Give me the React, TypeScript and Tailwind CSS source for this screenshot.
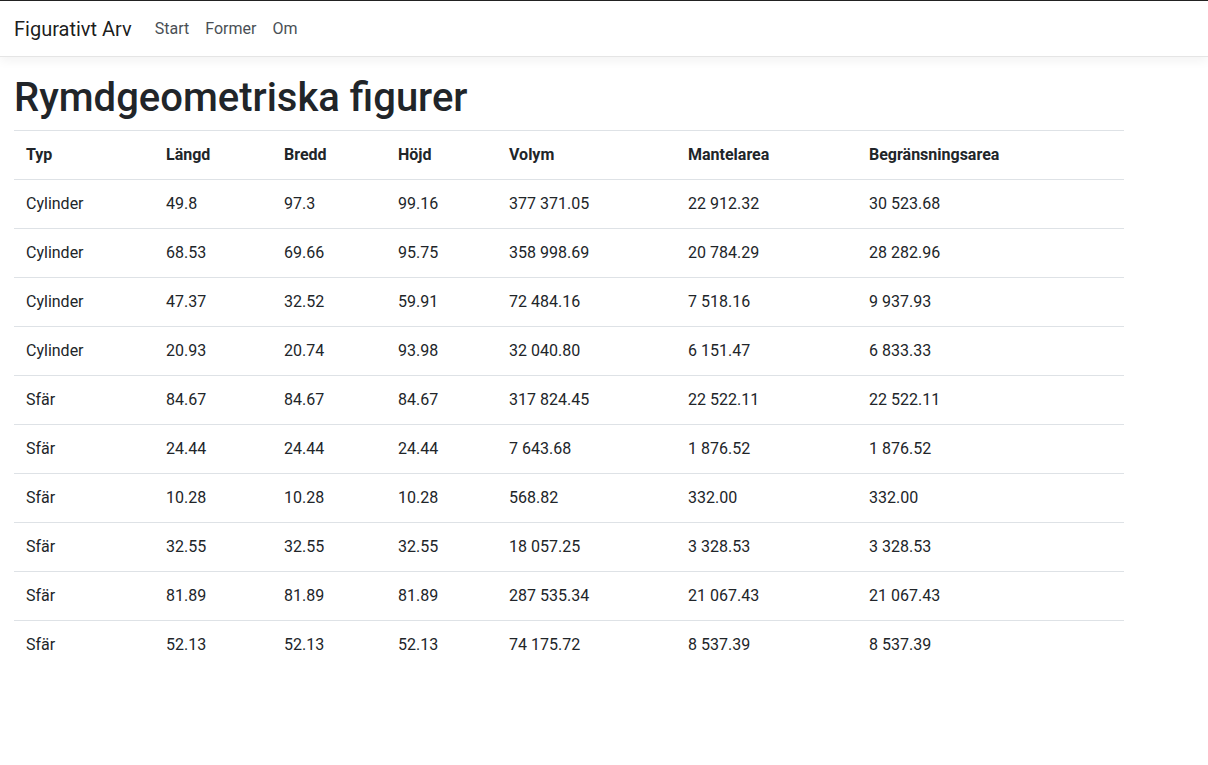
import React from 'react';

interface Shape {
  type: string;
  length: string;
  width: string;
  height: string;
  volume: string;
  lateral: string;
  total: string;
}

const shapes: Shape[] = [
  { type: 'Cylinder', length: '49.8', width: '97.3', height: '99.16', volume: '377 371.05', lateral: '22 912.32', total: '30 523.68' },
  { type: 'Cylinder', length: '68.53', width: '69.66', height: '95.75', volume: '358 998.69', lateral: '20 784.29', total: '28 282.96' },
  { type: 'Cylinder', length: '47.37', width: '32.52', height: '59.91', volume: '72 484.16', lateral: '7 518.16', total: '9 937.93' },
  { type: 'Cylinder', length: '20.93', width: '20.74', height: '93.98', volume: '32 040.80', lateral: '6 151.47', total: '6 833.33' },
  { type: 'Sfär', length: '84.67', width: '84.67', height: '84.67', volume: '317 824.45', lateral: '22 522.11', total: '22 522.11' },
  { type: 'Sfär', length: '24.44', width: '24.44', height: '24.44', volume: '7 643.68', lateral: '1 876.52', total: '1 876.52' },
  { type: 'Sfär', length: '10.28', width: '10.28', height: '10.28', volume: '568.82', lateral: '332.00', total: '332.00' },
  { type: 'Sfär', length: '32.55', width: '32.55', height: '32.55', volume: '18 057.25', lateral: '3 328.53', total: '3 328.53' },
  { type: 'Sfär', length: '81.89', width: '81.89', height: '81.89', volume: '287 535.34', lateral: '21 067.43', total: '21 067.43' },
  { type: 'Sfär', length: '52.13', width: '52.13', height: '52.13', volume: '74 175.72', lateral: '8 537.39', total: '8 537.39' },
];

const cell = 'px-3 py-3 border-t border-[#dee2e6] text-left align-top leading-6';

const App = () => {
  return (
    <div className="min-h-screen bg-white text-[#212529] font-['Roboto','Liberation_Sans',sans-serif] text-base">
      {/* Navbar */}
      <nav className="relative h-[57px] border-t border-[#222] border-b border-b-[#e5e5e5] shadow-[0_4px_10px_rgba(0,0,0,0.05)] flex items-center px-[14px]">
        <a className="text-xl text-[rgba(0,0,0,0.9)] leading-[30px] mr-[15px]">Figurativt Arv</a>
        <ul className="flex">
          {['Start', 'Former', 'Om'].map((link) => (
            <li key={link}>
              <a className="block px-2 py-2 text-[#4a4f55] leading-6">{link}</a>
            </li>
          ))}
        </ul>
      </nav>

      {/* Content */}
      <main className="px-[14px] pt-[17px]">
        <h1 className="text-[40px] font-medium leading-[48px] mb-2">Rymdgeometriska figurer</h1>
        <table className="w-[1110px] border-collapse">
          <thead>
            <tr>
              <th className={`${cell} w-[140px] font-bold`}>Typ</th>
              <th className={`${cell} w-[118px] font-bold`}>Längd</th>
              <th className={`${cell} w-[114px] font-bold`}>Bredd</th>
              <th className={`${cell} w-[111px] font-bold`}>Höjd</th>
              <th className={`${cell} w-[179px] font-bold`}>Volym</th>
              <th className={`${cell} w-[181px] font-bold`}>Mantelarea</th>
              <th className={`${cell} font-bold`}>Begränsningsarea</th>
            </tr>
          </thead>
          <tbody>
            {shapes.map((s, i) => (
              <tr key={i}>
                <td className={cell}>{s.type}</td>
                <td className={cell}>{s.length}</td>
                <td className={cell}>{s.width}</td>
                <td className={cell}>{s.height}</td>
                <td className={cell}>{s.volume}</td>
                <td className={cell}>{s.lateral}</td>
                <td className={cell}>{s.total}</td>
              </tr>
            ))}
          </tbody>
        </table>
      </main>
    </div>
  );
};

export default App;
